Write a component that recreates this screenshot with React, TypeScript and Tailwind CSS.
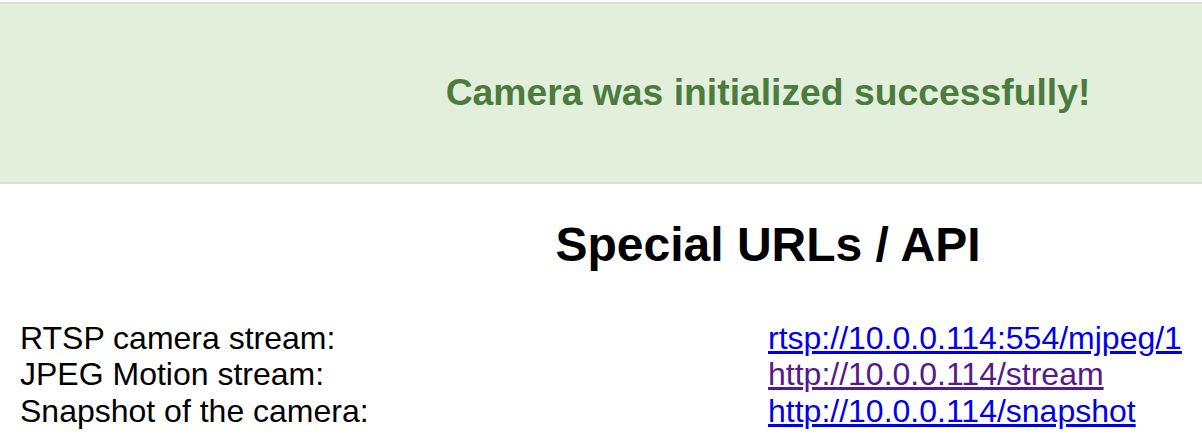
import React from 'react';

const links = [
  { label: 'RTSP camera stream:', href: 'rtsp://10.0.0.114:554/mjpeg/1', visited: false },
  { label: 'JPEG Motion stream:', href: 'http://10.0.0.114/stream', visited: true },
  { label: 'Snapshot of the camera:', href: 'http://10.0.0.114/snapshot', visited: false },
];

const App: React.FC = () => {
  return (
    <div className="w-full overflow-hidden bg-white font-['Liberation_Sans',Arial,sans-serif] text-black">
      {/* page was laid out at 1536px wide, the view shows its left part */}
      <div className="w-[1536px]">
        {/* Status banner */}
        <div className="mt-[2px] h-[182px] border-y-2 border-[#d7e4c9] bg-[#e2efda] flex items-center justify-center">
          <p className="text-[37.3px] font-bold leading-[43px] text-[#4b7b3f] mt-[-2px]">
            Camera was initialized successfully!
          </p>
        </div>

        {/* Special URLs */}
        <h1 className="mt-[37px] text-center text-[48px] font-bold leading-[48px]">
          Special URLs / API
        </h1>

        <div className="mt-[51px] px-[20px] grid grid-cols-2 text-[32px] leading-[36.3px]">
          {links.map((l) => (
            <React.Fragment key={l.href}>
              <div>{l.label}</div>
              <div>
                <a
                  href={l.href}
                  className={l.visited ? 'underline text-[#551a8b]' : 'underline text-[#0000ee]'}
                >
                  {l.href}
                </a>
              </div>
            </React.Fragment>
          ))}
        </div>
      </div>
    </div>
  );
};

export default App;
